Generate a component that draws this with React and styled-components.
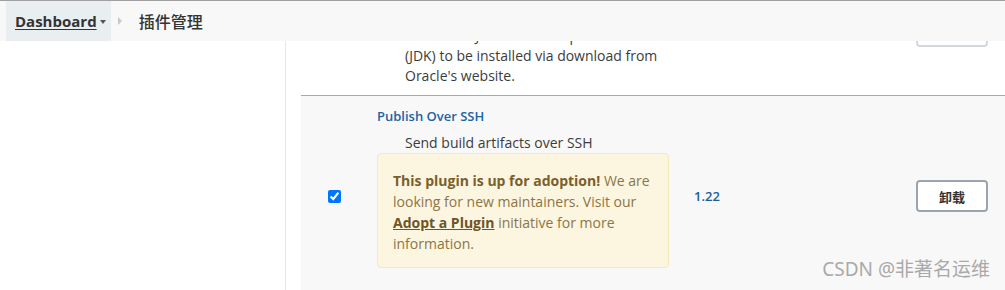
import React from 'react';
import styled, { createGlobalStyle } from 'styled-components';

const GlobalStyle = createGlobalStyle`
  html, body {
    margin: 0;
    padding: 0;
    background: #fff;
    font-family: "Open Sans", "Noto Sans", "Noto Sans CJK SC", sans-serif;
    color: #333;
  }
`;

const Page = styled.div`
  width: 1005px;
  height: 290px;
  display: flex;
  flex-direction: column;
  overflow: hidden;
  position: relative;
`;

const Breadcrumbs = styled.div`
  height: 40px;
  border-top: 1px solid #a0a0a0;
  background: #f8f8f8;
  display: flex;
  align-items: stretch;
  padding-left: 6px;
  flex-shrink: 0;
  position: relative;
  z-index: 2;
`;

const Crumb = styled.a`
  display: flex;
  align-items: center;
  gap: 3px;
  padding: 0 5px 0 9px;
  background: #e9eef1;
  color: #333;
  font-weight: 700;
  font-size: 15px;
  text-decoration: underline;
  text-underline-offset: 2px;
`;

const Caret = styled.span`
  width: 0;
  height: 0;
  border-left: 3.5px solid transparent;
  border-right: 3.5px solid transparent;
  border-top: 4px solid #555;
  margin-top: 1px;
`;

const Sep = styled.span`
  align-self: center;
  width: 0;
  height: 0;
  border-top: 4px solid transparent;
  border-bottom: 4px solid transparent;
  border-left: 4px solid #c8c8c8;
  margin: 0 17px 0 7px;
`;

const CrumbText = styled.span`
  align-self: center;
  font-size: 16px;
  color: #333;
  font-weight: 500;
`;

const Body = styled.div`
  flex: 1;
  display: flex;
  min-height: 0;
`;

const Side = styled.div`
  width: 285px;
  flex-shrink: 0;
  border-right: 1px solid #e6e6e6;
`;

const Main = styled.div`
  flex: 1;
  padding-left: 15px;
  overflow: hidden;
`;

/* scrolled position of the plugin list */
const Table = styled.div`
  margin-top: -75px;
`;

const Row = styled.div`
  display: grid;
  grid-template-columns: 66px 312px 227px 99px;
  align-items: center;
  background: ${p => (p.$alt ? '#f8f8f8' : '#fff')};
  border-top: 1px solid #a2acb6;
`;

const CheckCell = styled.div`
  display: flex;
  justify-content: center;
`;

const Check = styled.input`
  width: 13px;
  height: 13px;
  margin: 0;
  accent-color: #0075ff;
`;

const NameCell = styled.div`
  padding: ${p => p.$top}px 10px ${p => p.$bottom}px 10px;
  font-size: 14px;
`;

const Name = styled.a`
  display: block;
  color: #1c64a4;
  font-weight: 600;
  font-size: 13px;
  line-height: 20px;
`;

const Desc = styled.div`
  margin-top: 7px;
  padding-left: 28px;
  padding-right: 8px;
  line-height: 20px;
  color: #3c3c3c;
`;

const Warning = styled.div`
  border: 1px solid #f6e7bd;
  background: #fcf5e0;
  border-radius: 4px;
  padding: 16px 15px 13px;
  line-height: 21px;
  color: #8b7548;
  font-size: 14px;

  b {
    color: #7a5f2d;
  }
  a {
    color: #6e5528;
    font-weight: 700;
    text-decoration: underline;
  }
`;

const Version = styled.div`
  padding-left: 15px;
  color: #1c5e98;
  font-weight: 600;
  font-size: 13px;
`;

const ButtonCell = styled.div`
  padding-left: 10px;
`;

const Button = styled.button`
  width: 72px;
  height: 32px;
  background: #fff;
  border: 2px solid ${p => (p.disabled ? '#d2d7dc' : '#9aa5b0')};
  border-radius: 4px;
  font-family: inherit;
  font-size: 13px;
  font-weight: 600;
  color: #333;
`;

const Watermark = styled.div`
  position: absolute;
  right: 15px;
  bottom: 8px;
  font-size: 19px;
  color: #a9a9a9;
  z-index: 3;
  font-family: "Noto Sans", "Noto Sans CJK SC", sans-serif;
`;

export default function App() {
  return (
    <Page>
      <GlobalStyle />
      <Breadcrumbs>
        <Crumb>
          Dashboard
          <Caret />
        </Crumb>
        <Sep />
        <CrumbText>插件管理</CrumbText>
      </Breadcrumbs>
      <Body>
        <Side />
        <Main>
          <Table>
            <Row>
              <CheckCell />
              <NameCell $top={32} $bottom={9}>
                <Name>Oracle Java SE Development Kit Installer</Name>
                <Desc>
                  Allows the Java SE Development Kit (JDK) to be installed via download from Oracle's website.
                </Desc>
              </NameCell>
              <Version />
              <ButtonCell>
                <Button disabled>卸载</Button>
              </ButtonCell>
            </Row>
            <Row $alt>
              <CheckCell>
                <Check type="checkbox" defaultChecked />
              </CheckCell>
              <NameCell $top={10} $bottom={28}>
                <Name>Publish Over SSH</Name>
                <Desc>Send build artifacts over SSH</Desc>
                <Warning>
                  <b>This plugin is up for adoption!</b> We are looking for new maintainers. Visit our{' '}
                  <a>Adopt a Plugin</a> initiative for more information.
                </Warning>
              </NameCell>
              <Version>1.22</Version>
              <ButtonCell>
                <Button>卸载</Button>
              </ButtonCell>
            </Row>
          </Table>
        </Main>
      </Body>
      <Watermark>CSDN @非著名运维</Watermark>
    </Page>
  );
}
